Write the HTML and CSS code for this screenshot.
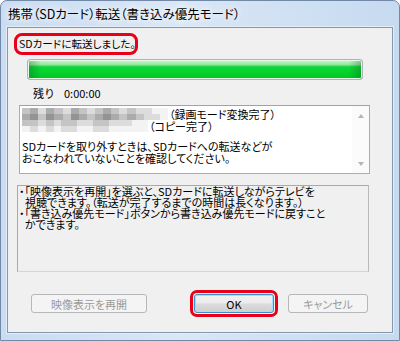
FILE: index.html
```html
<!DOCTYPE html>
<html lang="ja">
<head>
  <meta charset="UTF-8">
  <title>携帯（SDカード）転送</title>
  <link rel="stylesheet" href="styles.css">
</head>
<body>

<div class="window">
  <div class="titlebar">携帯（SDカード）転送（書き込み優先モード）</div>
  <div class="frame">
    <div class="client">

      <div class="msg">SDカードに転送しました。</div>

      <div class="progress"></div>

      <div class="remain">
        <span class="remain-label">残り</span>
        <span>0:00:00</span>
      </div>

      <!--転送結果ボックス-->
      <div class="textbox">
        <div class="tb-text">
          <div class="tb-line">
            <span class="mosaic m-long">
              <span class="mrow"><i class="s2"></i><i class="s3"></i><i class="s1"></i><i class="s3"></i><i class="s2"></i><i class="s1"></i><i class="s3"></i><i class="s2"></i><i class="s1"></i><i class="s2"></i><i class="s3"></i><i class="s2"></i><i class="s1"></i><i class="s2"></i><i class="s1"></i><i class="s1"></i><i class="s0"></i><i class="s0"></i></span>
              <span class="mrow"><i class="s3"></i><i class="s4"></i><i class="s2"></i><i class="s4"></i><i class="s3"></i><i class="s2"></i><i class="s4"></i><i class="s3"></i><i class="s2"></i><i class="s3"></i><i class="s4"></i><i class="s3"></i><i class="s2"></i><i class="s3"></i><i class="s2"></i><i class="s1"></i><i class="s1"></i><i class="s0"></i></span>
            </span>
            <span>（録画モード変換完了）</span>
          </div>
          <div class="tb-line">
            <span class="mosaic m-short">
              <span class="mrow"><i class="s2"></i><i class="s2"></i><i class="s1"></i><i class="s2"></i><i class="s1"></i><i class="s2"></i><i class="s2"></i><i class="s1"></i><i class="s1"></i><i class="s2"></i><i class="s2"></i><i class="s1"></i><i class="s1"></i><i class="s1"></i><i class="s0"></i><i class="s0"></i></span>
              <span class="mrow"><i class="s0"></i><i class="s1"></i><i class="s0"></i><i class="s1"></i><i class="s0"></i><i class="s1"></i><i class="s1"></i><i class="s0"></i><i class="s0"></i><i class="s1"></i><i class="s1"></i><i class="s0"></i><i class="s0"></i><i class="s0"></i><i class="s0"></i><i class="s0"></i></span>
            </span>
            <span>（コピー完了）</span>
          </div>
          <div class="tb-para">
            SDカードを取り外すときは、SDカードへの転送などが<br>
            おこなわれていないことを確認してください。
          </div>
        </div>
        <div class="scroll">
          <span class="arrow up"></span>
          <span class="arrow down"></span>
        </div>
      </div>

      <!--説明-->
      <div class="info">
        <p class="info-text"><span class="bullet">・</span>「映像表示を再開」を選ぶと、SDカードに転送しながらテレビを<br>視聴できます。（転送が完了するまでの時間は長くなります。）<br><span class="bullet">・</span>「書き込み優先モード」ボタンから書き込み優先モードに戻すこと<br>かできます。</p>
      </div>

      <div class="buttons">
        <span class="btn disabled btn-resume">映像表示を再開</span>
        <span class="ok-ring"><span class="btn btn-ok">OK</span></span>
        <span class="btn disabled btn-cancel">キャンセル</span>
      </div>

    </div>
  </div>
</div>

</body>
</html>
```

FILE: styles.css
```css
* { margin: 0; padding: 0; box-sizing: border-box; }
body { width: 400px; height: 341px; overflow: hidden;
  font-family: "Noto Sans CJK JP", "Noto Sans", sans-serif;
  font-size: 11px; color: #000; background: #fff; }

.window { width: 400px; height: 341px; display: flex; flex-direction: column;
  border: 1px solid #7189a6; border-radius: 7px 7px 0 0;
  background: linear-gradient(to right, #cadcf1, #d9e7f6 45%, #c6daf0); }
.titlebar { height: 26px; line-height: 25px; padding-left: 7px;
  font-size: 12.5px; font-feature-settings: "palt";
  text-shadow: 0 0 6px #fff, 0 0 10px #fff; }
.frame { flex: 1; display: flex; padding: 0 6px 7px; }
.client { flex: 1; display: flex; flex-direction: column; align-items: flex-start;
  background: #f0f0f0; border: 1px solid #8497ad;
  box-shadow: 0 0 0 1px #e4eefa; }

.msg { width: 124px; height: 22px; margin: 5px 0 0 6px;
  border: 3px solid #e8001a; border-radius: 8px;
  padding-left: 2px; line-height: 15px; white-space: nowrap;
  font-size: 10.6px; font-feature-settings: "palt"; }

.progress { width: 336px; height: 21px; margin: 4px 0 0 19px;
  border: 1px solid #b1b1b1; border-radius: 3px;
  background:
    linear-gradient(to right, rgba(0,90,20,.35), rgba(0,90,20,0) 4%, rgba(0,90,20,0) 96%, rgba(0,90,20,.35)),
    linear-gradient(to bottom, #d2f6d5 0, #92e99b 24%, #12d53a 36%, #00cf27 80%, #02c424 100%);
  box-shadow: inset 0 0 0 1px #e8f7e9; }

.remain { display: flex; height: 14px; line-height: 14px; margin: 6px 0 0 25px; }
.remain-label { width: 31px; }

.textbox { display: flex; width: 351px; height: 69px; margin: 5px 0 0 11px;
  background: #fff; border: 1px solid #abadb3; border-top-color: #9ea2aa; }
.tb-text { flex: 1; padding: 2px 0 0 2px; line-height: 12px;
  font-feature-settings: "palt"; white-space: nowrap; }
.tb-line { display: flex; height: 12px; }
.tb-para { margin-top: 8px; }
.mosaic { display: flex; flex-direction: column; height: 12px; margin-right: 1px; }
.m-long { width: 146px; }
.m-short { width: 126px; }
.mrow { display: flex; height: 6px; }
.mrow i { flex: 1; }
.s0 { background: #f3f3f3; }
.s1 { background: #dcdcdc; }
.s2 { background: #c4c4c4; }
.s3 { background: #ababab; }
.s4 { background: #939393; }

.scroll { width: 17px; display: flex; flex-direction: column;
  justify-content: space-between; align-items: center;
  padding: 8px 0 7px; background: #fbfbfb; }
.arrow { width: 0; height: 0; border-left: 3.5px solid transparent;
  border-right: 3.5px solid transparent; }
.arrow.up { border-bottom: 4px solid #b5b5b5; }
.arrow.down { border-top: 4px solid #b5b5b5; }

.info { width: 352px; height: 87px; margin: 11px 0 0 9px;
  border: 1px solid #a9a9a9; border-right-color: #b9b9b9; border-bottom-color: #d5d5d5; }
.info-text { padding-left: 7px; line-height: 11px;
  font-feature-settings: "palt"; white-space: nowrap; }
.bullet { margin-left: -6px; }

.buttons { display: flex; align-items: center; margin: 18px 0 0 23px; }
.btn { display: flex; justify-content: center; align-items: center;
  height: 19px; border-radius: 3px; font-size: 11px; font-feature-settings: "palt"; }
.disabled { border: 1px solid #b5b7ba; background: #f4f4f4; color: #9b9b9b; }
.btn-resume { width: 116px; }
.btn-cancel { width: 80px; margin-left: 10px; }
.ok-ring { margin-left: 43px; padding: 1px; border: 3px solid #e8001a; border-radius: 7px; }
.btn-ok { width: 80px; border: 1px solid #3c8fc9;
  background: linear-gradient(to bottom, #f3f3f3, #ebebeb 48%, #dcdcdc 52%, #cfcfcf);
  box-shadow: inset 0 0 0 1px #a6e1f8; }
```
